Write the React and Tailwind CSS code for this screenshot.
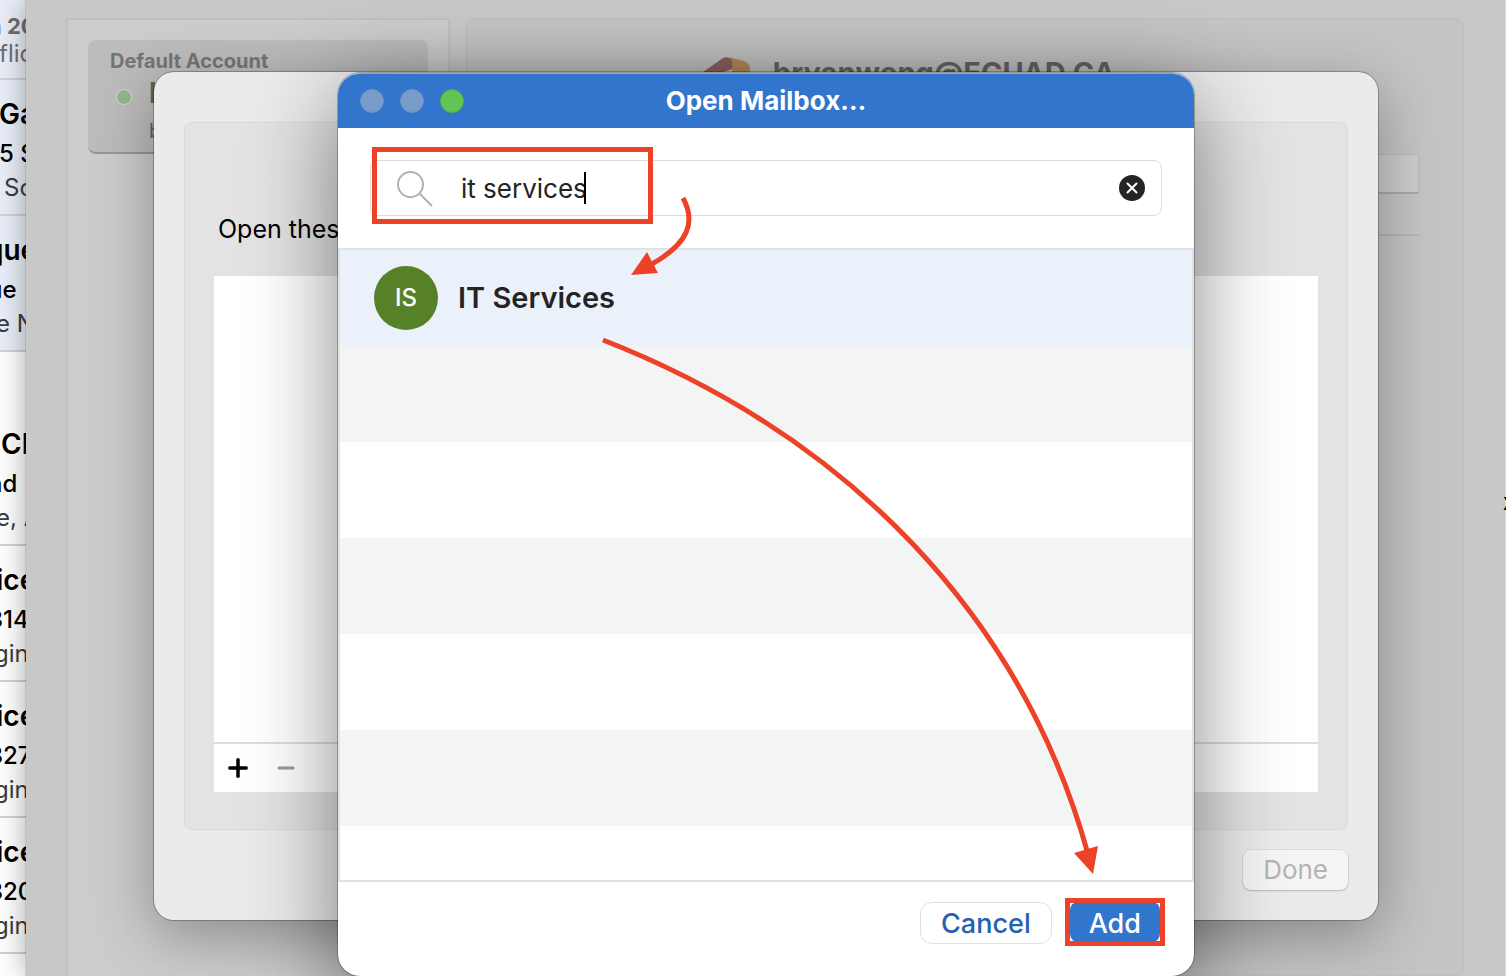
import { Plus, Minus } from "lucide-react";

const messages = [
  {
    id: 1,
    unread: true,
    lines: [
      { text: "Ga", at: "-ml-px" },
      { text: "5 S", at: "-ml-px" },
      { text: "Sc", at: "ml-1" },
    ],
  },
  {
    id: 2,
    unread: true,
    lines: [
      { text: "que", at: "-ml-3.5" },
      { text: "ue", at: "-ml-3" },
      { text: "e N", at: "-ml-1" },
    ],
  },
  {
    id: 3,
    first: true,
    lines: [
      { text: "Cl", at: "ml-px" },
      { text: "nd", at: "-ml-3" },
      { text: "e, A", at: "-ml-1" },
    ],
  },
  {
    id: 4,
    lines: [
      { text: "ice", at: "-ml-1" },
      { text: "314", at: "-ml-3" },
      { text: "gin", at: "-ml-1.5" },
    ],
  },
  {
    id: 5,
    lines: [
      { text: "ice", at: "-ml-1" },
      { text: "327", at: "-ml-3" },
      { text: "gin", at: "-ml-1.5" },
    ],
  },
  {
    id: 6,
    lines: [
      { text: "ice", at: "-ml-1" },
      { text: "320", at: "-ml-3" },
      { text: "gin", at: "-ml-1.5" },
    ],
  },
];

function MessageRow({ message }) {
  const [sender, subject, preview] = message.lines;
  return (
    <li
      className={
        "flex h-[136px] flex-col justify-start border-b-2 border-[#d2d2d2] pt-3.5 whitespace-nowrap " +
        (message.unread ? "bg-[#e9eef8] " : "bg-white ") +
        (message.first ? "mt-[58px]" : "")
      }
    >
      <span className={"text-[28px] leading-10 font-semibold text-black " + sender.at}>{sender.text}</span>
      <span className={"text-2xl leading-10 font-medium text-black " + subject.at}>{subject.text}</span>
      <span className={"text-2xl leading-7 text-[#3c3c3c] " + preview.at}>{preview.text}</span>
    </li>
  );
}

function MessageList() {
  return (
    <aside className="w-[26px] shrink-0 overflow-hidden bg-white">
      <div className="flex h-20 flex-col border-b-2 border-[#d2d2d2] bg-[#e9eef8] pt-3 whitespace-nowrap text-[#6f6f6f]">
        <span className="-ml-3 text-[22px] leading-7 font-bold">n 20</span>
        <span className="-ml-px text-2xl leading-7">flict</span>
      </div>
      <ul>
        {messages.map((m) => (
          <MessageRow key={m.id} message={m} />
        ))}
      </ul>
    </aside>
  );
}

function OfficeLogo() {
  return (
    <svg viewBox="0 0 48 48" className="h-12 w-12" aria-hidden="true">
      <path d="M26 0 L41 4 Q47 6 47 13 L47 48 L29 48 L29 6 Z" fill="#b78e58" />
      <path d="M0 15 L20 1 Q24 -1 28 2 Q30 4 29 12 L14 17 L14 48 L0 48 Z" fill="#8f6361" />
    </svg>
  );
}

function AccountsSettings() {
  return (
    <main className="flex gap-4 pt-[18px] pr-[42px] pl-10 [grid-area:1/1]">
      <nav className="w-96 shrink-0 border-x-2 border-t-2 border-[#c0c0c0] bg-[#cccccc] p-5">
        <div className="h-[114px] rounded-lg border-b-2 border-[#969696] bg-[#bcbcbc] px-[22px] pt-[7px]">
          <p className="text-xl leading-7 font-bold text-[#757575]">Default Account</p>
          <div className="flex items-start gap-[18px] pl-[7px]">
            <span className="mt-[15px] size-3.5 rounded-full bg-[#95b78c] ring-1 ring-[#cfd4cd]" />
            <div className="text-[#626262]">
              <p className="text-[28px] leading-9 font-bold">bryan</p>
              <p className="text-xl leading-10">bryan</p>
            </div>
          </div>
        </div>
      </nav>
      <section className="grow rounded-lg border border-[#bebebe] bg-[#c4c4c4] px-11">
        <header className="flex h-[135px] items-start justify-center gap-[22px] pt-[38px] pr-28">
          <OfficeLogo />
          <h1 className="text-[29px] leading-8 font-bold text-[#666666]">bryanwong@ECUAD.CA</h1>
        </header>
        <input
          aria-label="Account description"
          className="h-10 w-full border border-b-2 border-[#b8b8b8] border-b-[#a8a8a8] bg-[#cccccc]"
        />
        <hr className="mt-10 border-t-2 border-[#b5b5b5]" />
      </section>
    </main>
  );
}

function DelegationSheet() {
  return (
    <div className="px-32 pt-[72px] pb-14 [grid-area:1/1]">
      <div className="relative flex h-full flex-col rounded-[20px] bg-[#ebebeb] px-[30px] pt-[50px] pb-[30px] shadow-[0_0_0_1px_rgba(0,0,0,0.25),0_16px_60px_rgba(0,0,0,0.32)]">
        <section className="flex grow flex-col rounded-lg border border-[#d8d8d8] bg-[#e3e3e3] px-[29px] pt-[88px] pb-[37px]">
          <h2 className="pl-1 text-[25px] leading-9 text-black">Open these additional mailboxes:</h2>
          <div className="mt-[29px] flex grow flex-col bg-white">
            <div className="grow" />
            <div className="flex h-[50px] items-center gap-4 border-t-2 border-[#dddddd] pl-2">
              <button aria-label="Add mailbox" className="flex size-8 items-center justify-center text-black">
                <Plus size={28} strokeWidth={3} />
              </button>
              <button aria-label="Remove mailbox" disabled className="flex size-8 items-center justify-center text-[#9b9b9b]">
                <Minus size={24} strokeWidth={3} />
              </button>
            </div>
          </div>
        </section>
        <button
          disabled
          className="mt-5 h-10 self-end rounded-lg bg-[#f5f5f5] px-5 text-[26px] leading-10 text-[#b4b4b4] shadow-[0_0_0_1px_rgba(0,0,0,0.05),0_1px_2px_rgba(0,0,0,0.18)]"
        >
          Done
        </button>
      </div>
    </div>
  );
}

function WindowButton({ label, color }) {
  return <button aria-label={label} className={"size-6 rounded-full border " + color} />;
}

function Arrows() {
  return (
    <svg
      className="pointer-events-none absolute top-0 left-0"
      width="856"
      height="903"
      viewBox="338 73 856 903"
      fill="none"
      stroke="#ec4227"
      strokeWidth="5"
      aria-hidden="true"
    >
      <path d="M683 198 C696 222 689 243 652 264" />
      <path d="M631 275 L647 252 L658 273 Z" fill="#ec4227" stroke="none" />
      <path d="M603 340 C848 436 1022 616 1088 854" />
      <path d="M1093 874 L1074 853 L1098 846 Z" fill="#ec4227" stroke="none" />
    </svg>
  );
}

function OpenMailboxDialog() {
  return (
    <div className="flex justify-center pt-[73px] [grid-area:1/1]">
      <div
        role="dialog"
        aria-label="Open Mailbox"
        className="relative w-full max-w-[856px] self-start rounded-[22px] bg-white shadow-[0_0_0_1px_rgba(0,0,0,0.25),0_24px_90px_rgba(0,0,0,0.48)]"
      >
        <header className="grid h-[55px] grid-cols-[1fr_auto_1fr] items-center rounded-t-[22px] border-t border-[#7fa9e2] bg-[#3275cd] px-[22px]">
          <div className="flex gap-4">
            <WindowButton label="Close" color="border-[#6a8fc4] bg-[#7a9ccb]" />
            <WindowButton label="Minimize" color="border-[#6a8fc4] bg-[#7a9ccb]" />
            <WindowButton label="Zoom" color="border-[#4fae43] bg-[#61c554]" />
          </div>
          <h2 className="text-[26px] leading-8 font-bold text-white">Open Mailbox…</h2>
        </header>

        <div className="px-8 pt-8 pb-8">
          <div className="relative flex h-14 items-center rounded-lg border border-[#dcdcdc] pr-4 pl-6">
            <svg viewBox="0 0 38 38" className="size-[38px] shrink-0" fill="none" stroke="#b3b0ad" strokeWidth="2" aria-hidden="true">
              <circle cx="15.500" cy="15.500" r="12.5" />
              <path d="M24.500 24.500 L37 37" />
            </svg>
            <input
              aria-label="Search for a mailbox"
              defaultValue="it services"
              className="ml-7 w-full pt-0.5 text-[26px] leading-8 text-[#242424] outline-none"
            />
            <span className="absolute top-[11px] left-[213px] h-8 w-0.5 bg-black" />
            <button aria-label="Clear search" className="flex size-[26px] shrink-0 items-center justify-center rounded-full bg-[#242424]">
              <svg viewBox="0 0 26 26" className="size-[26px]" stroke="#ffffff" strokeWidth="2" strokeLinecap="round" aria-hidden="true">
                <path d="M8.500 8.500 L17.500 17.500 M17.500 8.500 L8.500 17.500" />
              </svg>
            </button>
            <span className="absolute -top-3.5 left-px h-[77px] w-[281px] border-5 border-[#ec4227]" />
          </div>
        </div>

        <ul className="border-2 border-[#e1e3e3]">
          <li className="flex h-24 items-center gap-5 bg-[#ebf1fa] pl-[34px]">
            <span className="flex size-16 items-center justify-center rounded-full bg-[#578127] text-2xl leading-8 font-medium text-white">
              IS
            </span>
            <span className="text-[29px] leading-10 font-semibold text-[#242424]">IT Services</span>
          </li>
          <li className="h-24 bg-[#f3f5f5]" />
          <li className="h-24" />
          <li className="h-24 bg-[#f3f5f5]" />
          <li className="h-24" />
          <li className="h-24 bg-[#f3f5f5]" />
          <li className="h-[54px]" />
        </ul>

        <footer className="flex items-start justify-end gap-[18px] px-[34px] pt-5 pb-8">
          <button className="h-[42px] rounded-xl border border-[#e0e0e0] px-5 pt-0.5 text-[27px] leading-8 font-medium text-[#255fb0]">
            Cancel
          </button>
          <div className="relative">
            <button className="block h-10 rounded-lg bg-[#3275cd] px-[19px] pt-1 text-[27px] leading-8 font-medium text-white">
              Add
            </button>
            <span className="absolute -inset-x-[5px] -inset-y-1 border-5 border-[#ec4227]" />
          </div>
        </footer>
        <Arrows />
      </div>
    </div>
  );
}

export default function App() {
  return (
    <div className="relative flex h-screen min-h-[600px] overflow-hidden bg-white font-['Inter','Liberation_Sans',sans-serif]">
      <MessageList />
      <div className="grid grow grid-cols-1 bg-[#c8c8c8] shadow-[inset_-1px_0_0_#dcdcdc,0_0_28px_rgba(0,0,0,0.35),0_0_1px_rgba(0,0,0,0.5)]">
        <AccountsSettings />
        <DelegationSheet />
        <OpenMailboxDialog />
      </div>
      <span className="absolute top-[486px] right-0 w-[3px] overflow-hidden text-2xl leading-8 font-bold text-black">x</span>
    </div>
  );
}
